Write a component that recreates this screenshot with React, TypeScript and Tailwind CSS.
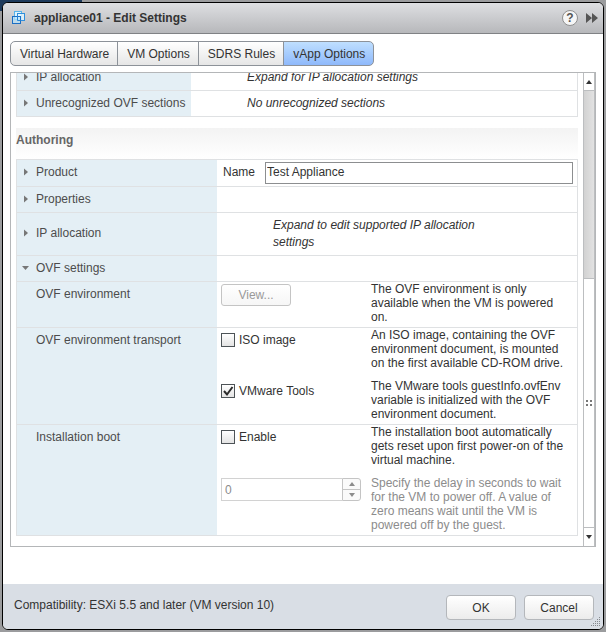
import { useState } from "react";
import type { ReactNode } from "react";

const tabs = ["Virtual Hardware", "VM Options", "SDRS Rules", "vApp Options"];

function VappIcon() {
  return (
    <svg width="14" height="14" viewBox="0 0 14 14" fill="none" aria-hidden="true">
      <rect x="2.5" y="0.5" width="7" height="8" fill="#dff3fd" stroke="#58b4ea" />
      <rect x="5.5" y="2.5" width="7" height="7" fill="#e6f6fe" fillOpacity="0.8" stroke="#2f8fdc" />
      <rect x="0.5" y="5.5" width="8" height="7" fill="#b9e4fb" fillOpacity="0.7" stroke="#1c6fc4" />
      <path d="M5.5 5v4.500h3" stroke="#2a86d8" />
    </svg>
  );
}

function Arrow({ open }: { open?: boolean }) {
  return (
    <svg width="8" height="8" viewBox="0 0 8 8" fill="#777777" aria-hidden="true">
      {open ? <path d="M0 2h7L3.5 6z" /> : <path d="M2 0.5v7L6 4z" />}
    </svg>
  );
}

function ExpandLabel({ text, open }: { text: string; open?: boolean }) {
  return (
    <button type="button" className="flex items-center gap-[6px] pb-[2px] pl-[5px] text-left" aria-expanded={!!open}>
      <Arrow open={open} />
      {text}
    </button>
  );
}

function Row({ label, wide, children }: { label: ReactNode; wide?: boolean; children?: ReactNode }) {
  return (
    <div className="flex border-b border-[#dfe1e3]">
      <div className={wide ? "flex w-[200px] shrink-0 bg-[#e4eff5] text-[#4c4c4c]" : "flex w-[174px] shrink-0 bg-[#e4eff5] text-[#4c4c4c]"}>
        {label}
      </div>
      <div className="min-w-0 flex-1">{children}</div>
    </div>
  );
}

function Setting({ control, dim, children }: { control: ReactNode; dim?: boolean; children: ReactNode }) {
  return (
    <div className="flex">
      <div className="w-[150px] shrink-0">{control}</div>
      <p className={dim ? "flex-1 pr-2 leading-[14px] text-[#8c8c8c]" : "flex-1 pr-2 leading-[14px]"}>{children}</p>
    </div>
  );
}

function Check({ label, start }: { label: string; start?: boolean }) {
  let [on, setOn] = useState(!!start);
  return (
    <label className="flex items-center gap-1 pt-[5px] leading-[14px]">
      <span className="relative flex">
        <input
          type="checkbox"
          checked={on}
          onChange={() => setOn(!on)}
          className="size-[14px] appearance-none border border-[#4d5357] bg-linear-to-b from-white to-[#e4e4e4]"
        />
        {on ? (
          <svg className="pointer-events-none absolute inset-0" width="14" height="14" viewBox="0 0 14 14" fill="none" stroke="#2b2b2b" strokeWidth="2">
            <path d="M3 7l3 3.500 5.500-7.500" />
          </svg>
        ) : null}
      </span>
      {label}
    </label>
  );
}

function ScrollBar() {
  return (
    <div className="flex w-[12px] shrink-0 flex-col border-x border-[#bcbec0]">
      <button type="button" aria-label="Scroll up" className="flex h-[18px] items-center justify-center border-b border-[#bcbec0]">
        <svg width="6" height="4" viewBox="0 0 6 4" fill="#333333"><path d="M3 0l3 4H0z" /></svg>
      </button>
      <div className="flex-[43] bg-linear-to-r from-[#d2d2d2] to-[#e2e2e2]"></div>
      <div className="flex flex-[57] items-center justify-center border-y border-[#bcbec0] bg-white">
        <svg width="6" height="6" viewBox="0 0 6 6" fill="#777777">
          <path d="M0 0h2v2H0zM4 0h2v2H4zM0 4h2v2H0zM4 4h2v2H4z" />
        </svg>
      </div>
      <button type="button" aria-label="Scroll down" className="flex h-[18px] items-center justify-center">
        <svg width="6" height="4" viewBox="0 0 6 4" fill="#333333"><path d="M0 0h6L3 4z" /></svg>
      </button>
    </div>
  );
}

function App() {
  let [tab, setTab] = useState("vApp Options");
  let [name, setName] = useState("Test Appliance");

  return (
    <div className="relative flex h-screen min-h-[560px] flex-col bg-[#9b9c9e] px-[2px] pt-[2px] pb-[2px] font-['Liberation_Sans',Arial,sans-serif] text-[12px] text-[#333333]">
      <div className="absolute top-0 left-0 h-[11px] w-[82px] bg-[#1d3a5c]"></div>

      <div className="relative flex min-h-0 flex-1 flex-col overflow-hidden rounded-[6px] border border-black bg-white">
        <header className="flex h-[31px] shrink-0 items-center border-b border-[#808285] bg-linear-to-b from-[#dedfe2] to-[#b7b8bb] pr-[5px] pl-[9px]">
          <VappIcon />
          <h1 className="ml-2 flex-1 font-bold">appliance01 - Edit Settings</h1>
          <button type="button" aria-label="Help" className="mr-2 flex size-[16px] items-center justify-center rounded-full border border-[#8f8f8f] bg-[#f6f6f6] text-[12px] font-bold text-[#555555]">
            ?
          </button>
          <button type="button" aria-label="Show more">
            <svg width="12" height="10" viewBox="0 0 12 10" fill="#555555"><path d="M0 0l6 5-6 5zM6 0l6 5-6 5z" /></svg>
          </button>
        </header>

        <main className="flex min-h-0 flex-1 flex-col px-[7px] pt-[7px] pb-[37px]">
          <nav className="flex">
            {tabs.map((t) => (
              <button
                key={t}
                type="button"
                onClick={() => setTab(t)}
                className={
                  t == tab
                    ? "-ml-px h-[25px] border border-[#8d9299] bg-linear-to-b from-[#bfdfff] to-[#8fb9fb] pr-2 pl-[9px] first:ml-0 first:rounded-l-[5px] last:rounded-r-[5px]"
                    : "-ml-px h-[25px] border border-[#8d9299] bg-linear-to-b from-white to-[#e6e6e6] pr-2 pl-[9px] first:ml-0 first:rounded-l-[5px] last:rounded-r-[5px]"
                }
              >
                {t}
              </button>
            ))}
          </nav>

          <div className="mt-[6px] flex min-h-0 flex-1 border border-[#b4b6b8]">
            <div className="flex min-w-0 flex-1 flex-col justify-end overflow-hidden pr-[5px] pb-[10px] pl-[5px]">
              <section className="border-x border-[#dfe1e3]">
                <Row label={<ExpandLabel text="IP allocation" />}>
                  <p className="pl-14 leading-[25px] italic">Expand for IP allocation settings</p>
                </Row>
                <Row label={<ExpandLabel text="Unrecognized OVF sections" />}>
                  <p className="pl-14 leading-[25px] italic">No unrecognized sections</p>
                </Row>
              </section>

              <h2 className="mt-[11px] h-[31px] shrink-0 bg-linear-to-b from-[#f3f3f3] to-white leading-[24px] font-bold text-[#666666]">Authoring</h2>

              <section className="border-x border-t border-[#dfe1e3]">
                <Row wide label={<ExpandLabel text="Product" />}>
                  <div className="flex items-center gap-[10px] py-[2px] pr-1 pl-[6px]">
                    <label htmlFor="name" className="pb-[2px]">Name</label>
                    <input
                      id="name"
                      value={name}
                      onChange={(e) => setName(e.target.value)}
                      className="h-[22px] min-w-0 flex-1 border border-[#8c8e90] px-px pb-[2px]"
                    />
                  </div>
                </Row>
                <Row wide label={<ExpandLabel text="Properties" />}>
                  <div className="h-[25px]"></div>
                </Row>
                <Row wide label={<ExpandLabel text="IP allocation" />}>
                  <p className="py-1 pr-[80px] pl-14 leading-[17px] italic">Expand to edit supported IP allocation settings</p>
                </Row>
                <Row wide label={<ExpandLabel text="OVF settings" open />}>
                  <div className="h-[25px]"></div>
                </Row>
                <Row wide label={<span className="pt-[5px] pl-[19px] leading-[14px]">OVF environment</span>}>
                  <div className="pb-[3px] pl-1">
                    <Setting
                      control={
                        <button type="button" disabled className="mt-[2px] h-[22px] w-[70px] rounded-[3px] border border-[#c4c4c4] bg-linear-to-b from-white to-[#f6f6f6] text-[#999999]">
                          View...
                        </button>
                      }
                    >
                      The OVF environment is only available when the VM is powered on.
                    </Setting>
                  </div>
                </Row>
                <Row wide label={<span className="pt-[5px] pl-[19px] leading-[14px]">OVF environment transport</span>}>
                  <div className="flex flex-col gap-[9px] pb-[3px] pl-1">
                    <Setting control={<Check label="ISO image" />}>
                      An ISO image, containing the OVF environment document, is mounted on the first available CD-ROM drive.
                    </Setting>
                    <Setting control={<Check label="VMware Tools" start />}>
                      The VMware tools guestInfo.ovfEnv variable is initialized with the OVF environment document.
                    </Setting>
                  </div>
                </Row>
                <Row wide label={<span className="pt-[5px] pl-[19px] leading-[14px]">Installation boot</span>}>
                  <div className="flex flex-col gap-[9px] pb-[3px] pl-1">
                    <Setting control={<Check label="Enable" />}>
                      The installation boot automatically gets reset upon first power-on of the virtual machine.
                    </Setting>
                    <Setting
                      dim
                      control={
                        <div className="mt-[2px] flex h-[23px] w-[140px]">
                          <input
                            type="text"
                            inputMode="numeric"
                            aria-label="Delay in seconds"
                            defaultValue="0"
                            disabled
                            className="min-w-0 flex-1 border border-r-0 border-[#d2d2d2] px-[3px] text-[#8c8c8c]"
                          />
                          <div className="flex w-[19px] flex-col divide-y divide-[#c4c4c4] rounded-r-[3px] border border-[#c4c4c4] bg-[#fafafa]">
                            <button type="button" disabled aria-label="Increase" className="flex flex-1 items-center justify-center">
                              <svg width="6" height="4" viewBox="0 0 6 4" fill="#8c8c8c"><path d="M3 0l3 4H0z" /></svg>
                            </button>
                            <button type="button" disabled aria-label="Decrease" className="flex flex-1 items-center justify-center">
                              <svg width="6" height="4" viewBox="0 0 6 4" fill="#8c8c8c"><path d="M0 0h6L3 4z" /></svg>
                            </button>
                          </div>
                        </div>
                      }
                    >
                      Specify the delay in seconds to wait for the VM to power off. A value of zero means wait until the VM is powered off by the guest.
                    </Setting>
                  </div>
                </Row>
              </section>
            </div>
            <ScrollBar />
          </div>
        </main>

        <footer className="relative flex h-[45px] shrink-0 items-center gap-2 bg-[#d9dee5] pt-[2px] pr-[9px] pl-[11px]">
          <p className="flex-1 pb-[6px]">Compatibility: ESXi 5.5 and later (VM version 10)</p>
          <button type="button" className="h-[25px] w-[70px] rounded-[4px] border border-[#b4b7bb] bg-linear-to-b from-white to-[#ececec]">OK</button>
          <button type="button" className="h-[25px] w-[70px] rounded-[4px] border border-[#b4b7bb] bg-linear-to-b from-white to-[#ececec]">Cancel</button>
          <svg className="absolute right-[2px] bottom-[2px]" width="10" height="10" viewBox="0 0 10 10" fill="#85898e" aria-hidden="true">
            <path d="M8 0h1v1H8zM8 2h1v1H8zM6 2h1v1H6zM8 4h1v1H8zM6 4h1v1H6zM4 4h1v1H4zM8 6h1v1H8zM6 6h1v1H6zM4 6h1v1H4zM2 6h1v1H2zM8 8h1v1H8zM6 8h1v1H6zM4 8h1v1H4zM2 8h1v1H2zM0 8h1v1H0z" />
          </svg>
        </footer>
      </div>
    </div>
  );
}

export default App;
